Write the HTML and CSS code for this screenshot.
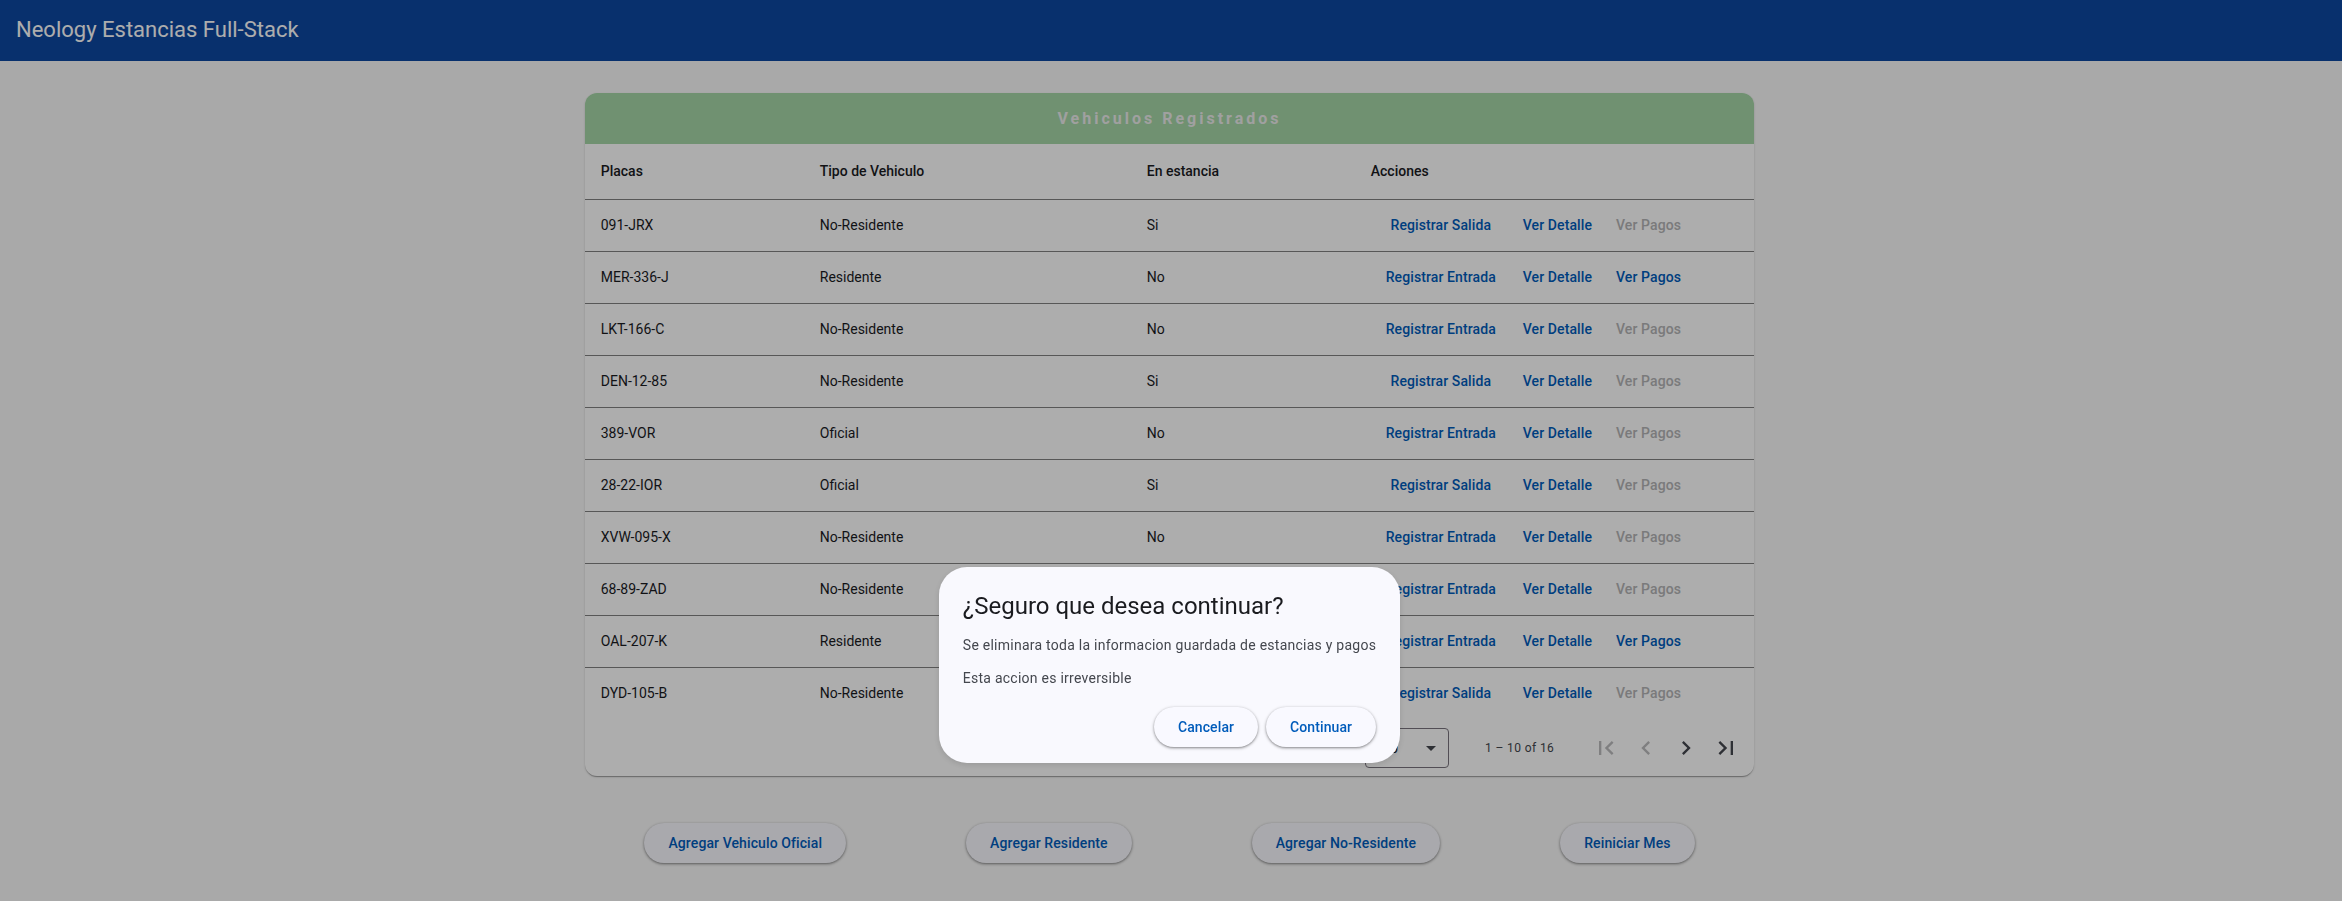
FILE: index.html
```html
<!DOCTYPE html>
<html lang="es">
<head>
<meta charset="utf-8">
<title>Neology Estancias Full-Stack</title>
<link rel="stylesheet" href="styles.css">
</head>
<body>
<header class="toolbar">
  <span class="toolbar-title">Neology Estancias Full-Stack</span>
</header>

<main class="content">
  <section class="card">
    <div class="card-header">Vehiculos Registrados</div>
    <div class="table">
      <div class="row head">
        <div class="cell">Placas</div>
        <div class="cell">Tipo de Vehiculo</div>
        <div class="cell">En estancia</div>
        <div class="cell">Acciones</div>
      </div>

      <div class="row">
        <div class="cell">091-JRX</div><div class="cell">No-Residente</div><div class="cell">Si</div>
        <div class="cell actions-cell"><button class="txt-btn main">Registrar Salida</button><button class="txt-btn">Ver Detalle</button><button class="txt-btn" disabled>Ver Pagos</button></div>
      </div>
      <div class="row">
        <div class="cell">MER-336-J</div><div class="cell">Residente</div><div class="cell">No</div>
        <div class="cell actions-cell"><button class="txt-btn main">Registrar Entrada</button><button class="txt-btn">Ver Detalle</button><button class="txt-btn">Ver Pagos</button></div>
      </div>
      <div class="row">
        <div class="cell">LKT-166-C</div><div class="cell">No-Residente</div><div class="cell">No</div>
        <div class="cell actions-cell"><button class="txt-btn main">Registrar Entrada</button><button class="txt-btn">Ver Detalle</button><button class="txt-btn" disabled>Ver Pagos</button></div>
      </div>
      <div class="row">
        <div class="cell">DEN-12-85</div><div class="cell">No-Residente</div><div class="cell">Si</div>
        <div class="cell actions-cell"><button class="txt-btn main">Registrar Salida</button><button class="txt-btn">Ver Detalle</button><button class="txt-btn" disabled>Ver Pagos</button></div>
      </div>
      <div class="row">
        <div class="cell">389-VOR</div><div class="cell">Oficial</div><div class="cell">No</div>
        <div class="cell actions-cell"><button class="txt-btn main">Registrar Entrada</button><button class="txt-btn">Ver Detalle</button><button class="txt-btn" disabled>Ver Pagos</button></div>
      </div>
      <div class="row">
        <div class="cell">28-22-IOR</div><div class="cell">Oficial</div><div class="cell">Si</div>
        <div class="cell actions-cell"><button class="txt-btn main">Registrar Salida</button><button class="txt-btn">Ver Detalle</button><button class="txt-btn" disabled>Ver Pagos</button></div>
      </div>
      <div class="row">
        <div class="cell">XVW-095-X</div><div class="cell">No-Residente</div><div class="cell">No</div>
        <div class="cell actions-cell"><button class="txt-btn main">Registrar Entrada</button><button class="txt-btn">Ver Detalle</button><button class="txt-btn" disabled>Ver Pagos</button></div>
      </div>
      <div class="row">
        <div class="cell">68-89-ZAD</div><div class="cell">No-Residente</div><div class="cell">No</div>
        <div class="cell actions-cell"><button class="txt-btn main">Registrar Entrada</button><button class="txt-btn">Ver Detalle</button><button class="txt-btn" disabled>Ver Pagos</button></div>
      </div>
      <div class="row">
        <div class="cell">OAL-207-K</div><div class="cell">Residente</div><div class="cell">No</div>
        <div class="cell actions-cell"><button class="txt-btn main">Registrar Entrada</button><button class="txt-btn">Ver Detalle</button><button class="txt-btn">Ver Pagos</button></div>
      </div>
      <div class="row last">
        <div class="cell">DYD-105-B</div><div class="cell">No-Residente</div><div class="cell">Si</div>
        <div class="cell actions-cell"><button class="txt-btn main">Registrar Salida</button><button class="txt-btn">Ver Detalle</button><button class="txt-btn" disabled>Ver Pagos</button></div>
      </div>
    </div>

    <div class="paginator">
      <div class="page-size">
        <span class="page-size-label">Items per page:</span>
        <div class="select">
          <span class="select-value">10</span>
          <span class="select-arrow"></span>
        </div>
      </div>
      <span class="range-label">1 – 10 of 16</span>
      <div class="range-actions">
        <button class="icon-btn" disabled aria-label="First page"><svg viewBox="0 0 24 24"><path d="M18.41 16.59L13.82 12l4.59-4.59L17 6l-6 6 6 6zM6 6h2v12H6z"/></svg></button>
        <button class="icon-btn" disabled aria-label="Previous page"><svg viewBox="0 0 24 24"><path d="M15.41 7.41L14 6l-6 6 6 6 1.41-1.41L10.83 12z"/></svg></button>
        <button class="icon-btn" aria-label="Next page"><svg viewBox="0 0 24 24"><path d="M8.59 16.59L13.17 12 8.59 7.41 10 6l6 6-6 6-1.41-1.41z"/></svg></button>
        <button class="icon-btn" aria-label="Last page"><svg viewBox="0 0 24 24"><path d="M5.59 7.41L10.18 12l-4.59 4.59L7 18l6-6-6-6zM16 6h2v12h-2z"/></svg></button>
      </div>
    </div>
  </section>

  <div class="page-actions">
    <button class="elev-btn">Agregar Vehiculo Oficial</button>
    <button class="elev-btn">Agregar Residente</button>
    <button class="elev-btn">Agregar No-Residente</button>
    <button class="elev-btn">Reiniciar Mes</button>
  </div>
</main>

<div class="backdrop"></div>

<div class="dialog-pane">
  <div class="dialog" role="dialog">
    <h2 class="dialog-title">¿Seguro que desea continuar?</h2>
    <div class="dialog-content">
      <p>Se eliminara toda la informacion guardada de estancias y pagos</p>
      <p>Esta accion es irreversible</p>
    </div>
    <div class="dialog-actions">
      <button class="elev-btn">Cancelar</button>
      <button class="elev-btn">Continuar</button>
    </div>
  </div>
</div>
</body>
</html>
```

FILE: styles.css
```css
* { box-sizing: border-box; }

html, body {
  margin: 0;
  padding: 0;
  height: 100%;
}

body {
  background: #fafafa;
  font-family: Roboto, "Noto Sans", sans-serif;
  color: #1a1b1f;
  overflow: hidden;
}

button {
  font-family: inherit;
  border: none;
  background: none;
  cursor: pointer;
  padding: 0;
}

/* Toolbar */
.toolbar {
  height: 61px;
  background: #0d47a1;
  color: #ffffff;
  display: flex;
  align-items: center;
  padding: 0 16px;
}

.toolbar-title {
  font-size: 22px;
  line-height: 32px;
  font-weight: 400;
  letter-spacing: 0;
  position: relative;
  top: -1px;
}

/* Content */
.content {
  padding-top: 32px;
  padding-right: 3px;
}

.card {
  width: 50%;
  margin: 0 auto;
  background: #ffffff;
  border-radius: 12px;
  box-shadow: 0 2px 1px -1px rgba(0,0,0,.2), 0 1px 1px 0 rgba(0,0,0,.14), 0 1px 3px 0 rgba(0,0,0,.12);
  overflow: hidden;
}

.card-header {
  height: 51px;
  background: #a5d6a7;
  color: #ececec;
  display: flex;
  align-items: center;
  justify-content: center;
  font-size: 16px;
  font-weight: 700;
  letter-spacing: 3px;
}

/* Table */
.row {
  display: grid;
  grid-template-columns: 219px 327px 224px 1fr;
  align-items: center;
  height: 52px;
  padding-bottom: 2px;
  border-bottom: 1px solid #808080;
  font-size: 14px;
  color: #1a1b1f;
}

.row.head {
  height: 56px;
  font-weight: 500;
}

.row.last {
  border-bottom: none;
}

.cell {
  padding-left: 16px;
  white-space: nowrap;
}

.actions-cell {
  display: flex;
  align-items: center;
}

.txt-btn {
  height: 40px;
  padding: 0 12px;
  font-size: 14px;
  font-weight: 500;
  letter-spacing: 0.1px;
  color: #005cbb;
  border-radius: 20px;
  white-space: nowrap;
}

.txt-btn.main {
  width: 140px;
  padding: 0;
  text-align: center;
}

.txt-btn:disabled {
  color: #b4b4b6;
  cursor: default;
}

/* Paginator */
.paginator {
  height: 56px;
  display: flex;
  align-items: center;
  justify-content: flex-end;
  padding: 0 8px;
  font-size: 12px;
  letter-spacing: 0.4px;
  color: #44474e;
}

.page-size {
  display: flex;
  align-items: center;
  margin-right: 8px;
}

.page-size-label {
  margin: 0 4px;
}

.select {
  width: 84px;
  height: 40px;
  margin: 0 4px;
  border: 1px solid #79747e;
  border-radius: 4px;
  display: flex;
  align-items: center;
  padding: 0 12px 0 16px;
  font-size: 14px;
  color: #1a1b1f;
}

.select-value {
  flex: 1;
}

.select-arrow {
  width: 0;
  height: 0;
  border-left: 5px solid transparent;
  border-right: 5px solid transparent;
  border-top: 5px solid #44474e;
}

.range-label {
  margin: 0 32px 0 24px;
}

.range-actions {
  display: flex;
  align-items: center;
}

.icon-btn {
  width: 40px;
  height: 40px;
  display: flex;
  align-items: center;
  justify-content: center;
  color: #44474e;
}

.icon-btn svg {
  width: 28px;
  height: 28px;
  fill: currentColor;
}

.icon-btn:disabled {
  color: #bbbbbd;
  cursor: default;
}

/* Page actions */
.page-actions {
  display: flex;
  justify-content: center;
  gap: 120px;
  margin-top: 47px;
}

.elev-btn {
  height: 40px;
  padding: 0 24px;
  border-radius: 20px;
  background: #f9f9ff;
  color: #005cbb;
  font-size: 14px;
  font-weight: 500;
  letter-spacing: 0.1px;
  box-shadow: 0 1px 2px 0 rgba(0,0,0,.3), 0 1px 3px 1px rgba(0,0,0,.15);
  white-space: nowrap;
}

/* Overlay */
.backdrop {
  position: fixed;
  inset: 0;
  background: rgba(0,0,0,.32);
}

.dialog-pane {
  position: fixed;
  top: 567px;
  left: 0;
  right: 0;
  display: flex;
  justify-content: center;
  padding-right: 3px;
}

.dialog {
  background: #f9f9fe;
  border-radius: 28px;
  padding: 23px 24px 16px;
  box-shadow: 0 2px 6px rgba(0,0,0,.12);
}

.dialog-title {
  margin: 0 0 13px;
  font-size: 24px;
  line-height: 32px;
  font-weight: 400;
  color: #1a1b1f;
}

.dialog-content {
  font-size: 14px;
  line-height: 20px;
  color: #44474e;
  letter-spacing: 0.25px;
}

.dialog-content p {
  margin: 0 0 13px;
  white-space: nowrap;
}

.dialog-content p:last-child {
  margin-bottom: 0;
}

.dialog-actions {
  display: flex;
  justify-content: flex-end;
  gap: 8px;
  margin-top: 19px;
}
```
